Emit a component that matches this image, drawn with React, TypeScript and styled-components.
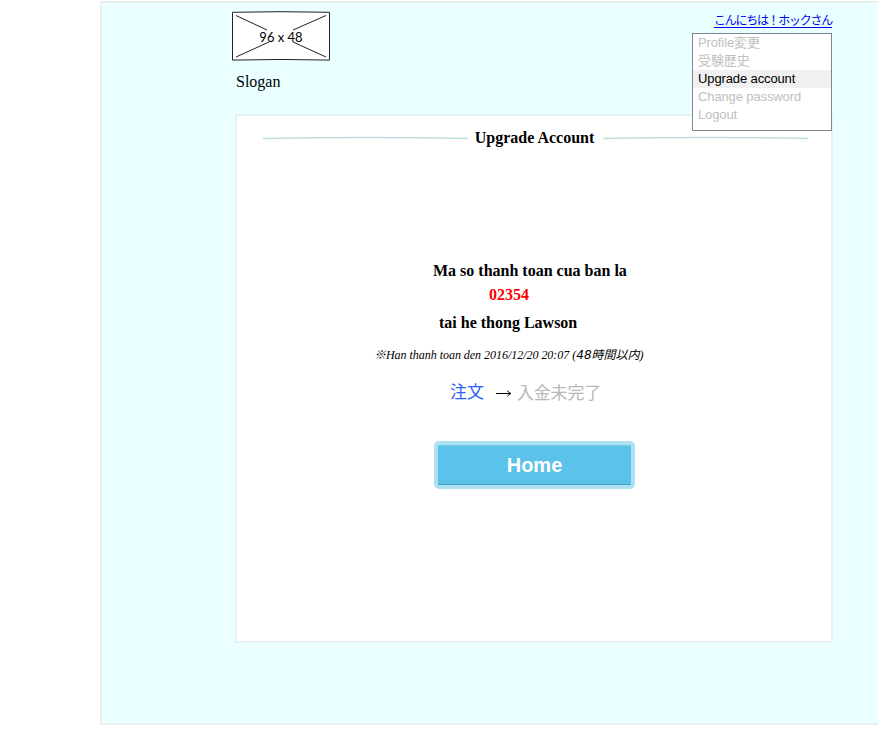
import React from "react";
import styled, { createGlobalStyle } from "styled-components";

const GlobalStyle = createGlobalStyle`
  * { box-sizing: border-box; }
  html, body { margin: 0; padding: 0; background: #fff; overflow: hidden; }
  body { font-family: "Liberation Serif", serif; color: #000; }
`;

const Frame = styled.div`
  height: 724px;
  margin: 1px 0 0 100px;
  border: 2px solid #e8efef;
  border-right: 0;
  background: #eaffff;
`;

const Header = styled.header`
  display: flex;
  justify-content: space-between;
  height: 111px;
  padding: 8px 0 0 130px;
  width: 730px;
`;

const Brand = styled.div`
  display: flex;
  flex-direction: column;
`;

const LogoImage = styled.svg`
  display: block;
  width: 98px;
  height: 50px;
  overflow: visible;
`;

const Slogan = styled.div`
  margin: 12px 0 0 4px;
  font-size: 16px;
  line-height: 18px;
`;

const Account = styled.div`
  position: relative;
  width: 140px;
  text-align: right;
`;

const Greeting = styled.a`
  display: block;
  padding-top: 1px;
  font: 12px/18px "Liberation Sans", "Noto Sans CJK JP", sans-serif;
  letter-spacing: -1.27px;
  color: #0000ee;
  text-decoration: underline;
  text-decoration-skip-ink: none;
  text-underline-offset: 2px;
  white-space: nowrap;
`;

const Menu = styled.ul`
  position: absolute;
  top: 22px;
  right: 0;
  width: 140px;
  height: 98px;
  margin: 0;
  padding: 0;
  list-style: none;
  text-align: left;
  background: #fff;
  border: 1px solid #7f868f;
`;

const MenuItem = styled.li<{ $active?: boolean }>`
  height: 18px;
  padding-left: 5px;
  font: 13px/18px "Liberation Sans", "Noto Sans CJK JP", sans-serif;
  letter-spacing: -0.12px;
  white-space: nowrap;
  color: ${(p) => (p.$active ? "#000" : "#c0c0c0")};
  background: ${(p) => (p.$active ? "#f0f0f0" : "transparent")};
`;

const Card = styled.main`
  width: 598px;
  height: 529px;
  margin-left: 133px;
  border: 2px solid #e8f2f2;
  background: #fff;
`;

const TitleRow = styled.div`
  display: flex;
  align-items: center;
  height: 20px;
  margin: 12px 23px 0 26px;
`;

const Rule = styled.svg`
  flex: none;
  display: block;
  width: 205px;
  height: 4px;
  overflow: visible;
`;

const Title = styled.h1`
  flex: 1;
  margin: 0;
  padding-right: 2px;
  font-size: 16px;
  line-height: 20px;
  text-align: center;
  white-space: nowrap;
`;

const Instructions = styled.section`
  height: 232px;
  padding-top: 113px;
  white-space: nowrap;
`;

const Line = styled.p<{ $indent: number; $gap?: number; $color?: string }>`
  margin: ${(p) => p.$gap ?? 0}px 0 0 ${(p) => p.$indent}px;
  font-size: 16px;
  font-weight: bold;
  line-height: 20px;
  color: ${(p) => p.$color ?? "#000"};
`;

const Note = styled.p`
  display: flex;
  margin: 12px 0 0 137px;
  font: italic 12px/20px "Liberation Serif", "Noto Sans CJK JP", serif;
`;

const Deadline = styled.span`
  letter-spacing: -0.03px;
`;

const Hours = styled.span`
  margin-left: 3px;
`;

const HoursValue = styled.span`
  font-family: "DejaVu Sans", "Noto Sans CJK JP", sans-serif;
`;

const Status = styled.div`
  display: flex;
  align-items: center;
  height: 24px;
  margin-left: 213px;
  font: 17px/24px "Noto Sans CJK JP", sans-serif;
  white-space: nowrap;
`;

const Ordered = styled.span`
  margin-top: -3px;
  color: #2962f5;
`;

const Arrow = styled.svg`
  width: 16px;
  height: 8px;
  margin: 1px 5px 0 12px;
`;

const Unpaid = styled.span`
  margin-top: -1px;
  letter-spacing: -0.2px;
  color: #b8b8b8;
`;

const HomeButton = styled.button`
  display: block;
  width: 201px;
  height: 48px;
  margin: 37px 0 0 197px;
  padding: 0;
  border: 4px solid #ade1f2;
  border-radius: 5px;
  background: #5bc2ea;
  box-shadow: inset 0 -1px #439dbc, inset 0 1px #79cbe7;
  color: #fff;
  font: bold 20px/38px "Liberation Sans", sans-serif;
`;

const menuItems = ["Profile変更", "受験歴史", "Upgrade account", "Change password", "Logout"];

function Placeholder() {
  return (
    <LogoImage viewBox="0 0 98 50" fill="none" stroke="#222">
      <path d="M.5 1.3 Q49 .1 97.5 1.3 V49.1 Q49 47.8 .5 49.1Z" fill="#fff" />
      <path d="M4 4.5 35 19M94 4.5 61 19M4 46 37 31M94 46 61 31" />
      <text x="49" y="31.3" textAnchor="middle" fill="#000" stroke="none" fontFamily="Lato" fontSize="13">96 x 48</text>
    </LogoImage>
  );
}

function Divider() {
  return (
    <Rule viewBox="0 0 205 4" fill="none" stroke="#bddedf">
      <path d="M0 2.5 Q103 .5 205 2.5" strokeWidth="1.4" />
    </Rule>
  );
}

export default function App() {
  return (
    <>
      <GlobalStyle />
      <Frame>
        <Header>
          <Brand>
            <Placeholder />
            <Slogan>Slogan</Slogan>
          </Brand>
          <Account>
            <Greeting href="#">こんにちは！ホックさん</Greeting>
            <Menu>
              {menuItems.map((label) => (
                <MenuItem key={label} $active={label === "Upgrade account"}>{label}</MenuItem>
              ))}
            </Menu>
          </Account>
        </Header>
        <Card>
          <TitleRow>
            <Divider />
            <Title>Upgrade Account</Title>
            <Divider />
          </TitleRow>
          <Instructions>
            <Line $indent={196}>Ma so thanh toan cua ban la</Line>
            <Line $indent={252} $gap={4} $color="#f00">02354</Line>
            <Line $indent={202} $gap={8}>tai he thong Lawson</Line>
            <Note>
              <Deadline>※Han thanh toan den 2016/12/20 20:07</Deadline>
              <Hours>(<HoursValue>48時間以内</HoursValue>)</Hours>
            </Note>
          </Instructions>
          <Status>
            <Ordered>注文</Ordered>
            <Arrow viewBox="0 0 16 8" fill="none" stroke="#000">
              <path d="M0 4.5H14.5M11.5 1.5Q12.5 4 15 4.5Q12.5 5 11.5 7.5" />
            </Arrow>
            <Unpaid>入金未完了</Unpaid>
          </Status>
          <HomeButton>Home</HomeButton>
        </Card>
      </Frame>
    </>
  );
}
